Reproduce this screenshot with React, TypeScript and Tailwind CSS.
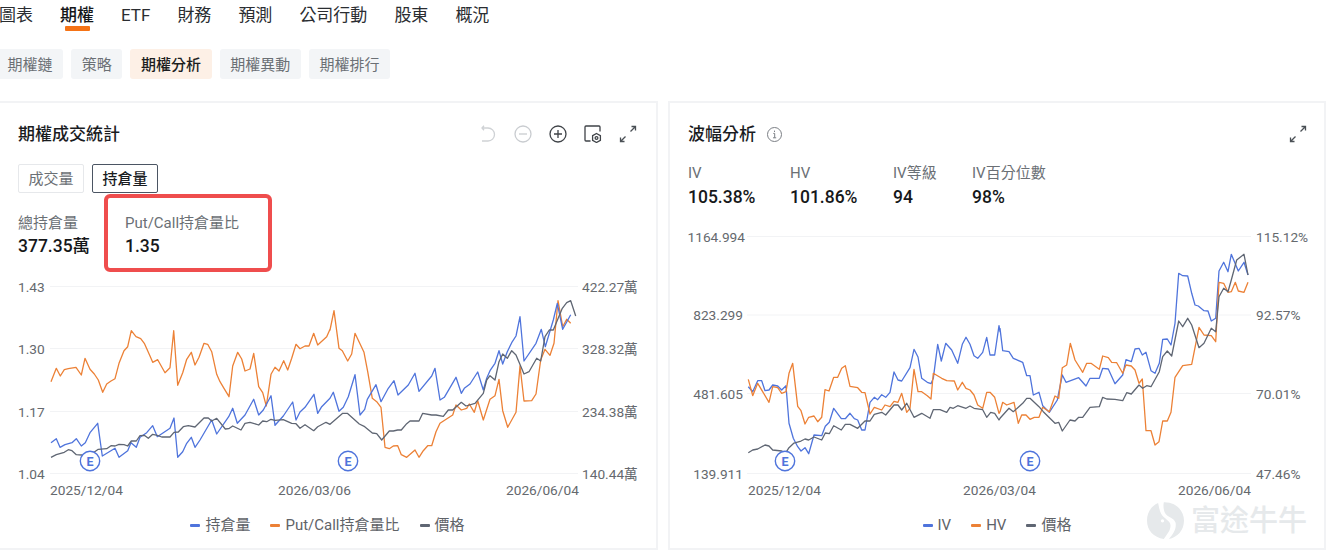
import React from "react";

const BLUE = "#4f74dc";
const ORANGE = "#ec8136";
const GRAY = "#5f6673";

function pts(s: string, ox: number, oy: number) {
  const n = s.trim().split(/[\s;,]+/).map(Number);
  const out: string[] = [];
  for (let i = 0; i + 1 < n.length; i += 2) out.push(`${(ox + n[i] / 3).toFixed(1)},${(oy + n[i + 1] / 3).toFixed(1)}`);
  return out.join(" ");
}

const L = {
  blue: [
    pts("153,488 169,476 180,502 195,494 216,488 229,476 244,498 256,488 270,458 293,430 307,528 345,505 357,532 383,512 393,488 409,502 420,472 440,458 458,437 472,470 490,458 510,445 522,414 533,532 548,515 560,490 574,472 585,502 600,480 635,420 650,462 686,410 698,385 712,430 735,405 761,358 776,405 790,390 813,347 825,436 850,408 878,366 888,420 900,396 915,382 942,343 953,400 965,380 990,355", 0, 280),
    pts("0,355 10,337 27,394 40,382 55,350 75,284 90,405 104,388 112,358 138,314 153,365 175,325 192,302 204,345 235,315 255,280 267,334 305,288 315,265 330,360 343,352 378,292 394,340 403,325 420,312 443,276 460,330 470,295 480,272 495,250 507,212 518,252 532,215 545,188 558,168 570,110 582,243 618,190 634,148 646,200 670,120 682,70 698,148 722,104", 330, 280),
  ].join(" "),
  orange: [
    pts("153,305 169,265 181,288 193,269 205,266 228,262 244,285 255,235 270,268 283,282 295,300 308,337 320,312 333,303 345,296 357,250 372,212 383,200 394,152 408,170 422,176 433,190 450,228 458,247 473,239 495,278 510,263 521,152 533,316 548,278 560,238 574,217 585,255 597,232 612,190 623,193 635,215 650,283 660,305 672,325 687,350 698,258 713,217 725,237 735,273 750,267 761,220 776,320 788,338 799,378 813,283 825,262 837,273 851,242 863,270 875,235 888,193 900,206 915,198 927,198 941,160 953,195 980,170 990,148", 0, 280),
    pts("0,150 12,92 27,205 37,212 53,243 65,222 75,160 102,217 113,275 127,355 140,365 153,382 165,502 178,506 190,498 203,497 214,524 230,532 255,510 267,532 280,512 293,497 305,497 318,455 330,430 345,420 368,405 378,375 394,390 410,385 418,372 433,397 443,362 460,420 480,358 495,347 507,298 518,392 533,442 558,397 570,258 582,363 605,362 618,342 632,240 645,208 660,226 672,190 684,62 698,140 710,118 722,130", 330, 280),
  ].join(" "),
  gray: [
    pts("153,532 169,524 193,517 205,509 216,512 229,524 245,525 270,525 295,508 320,506 333,497 345,498 357,493 372,494 383,498 394,483 409,483 420,467 433,466 445,475 458,463 472,466 485,471 510,471 522,457 535,456 550,440 565,437 585,441 612,414 625,414 635,423 650,415 676,447 686,446 698,438 723,450 735,430 750,427 776,435 788,423 800,425 813,418 825,421 850,419 875,430 888,431 900,445 915,434 941,452 953,440 978,427 990,433", 0, 280),
    pts("0,433 38,400 52,400 88,432 104,440 127,459 140,461 155,480 178,453 190,453 203,450 214,450 230,431 240,423 267,423 278,400 305,405 318,405 340,409 355,390 368,390 394,367 408,378 435,370 460,340 470,300 480,287 495,300 507,245 518,222 532,235 545,212 558,225 582,282 597,275 620,235 632,243 645,170 658,150 670,150 697,85 710,68 722,62 737,108", 330, 280),
  ].join(" "),
};

const R = {
  blue: [
    pts("235,485 248,500 263,467 275,467 285,497 297,495 308,480 323,483 335,495 348,482 357,595 370,640 383,665 393,678 405,668 416,686 432,630 455,632 466,604 478,592 491,550 514,581 526,581 540,565 553,581 563,585 575,615 585,615 600,532 613,517 623,524 635,509 647,517 660,502 672,441 684,465 695,468 720,428 732,373 744,396 755,460 772,472 783,476 790,460 803,358 814,408 827,355 845,375 863,415 877,358 888,337 900,358 912,392 923,400 938,382 950,337 960,390 974,390 987,302 990,320", 670, 225),
    pts("0,310 8,377 27,380 40,400 68,412 80,452 90,452 100,510 117,502 128,542 148,562 172,525 187,450 198,472 236,458 258,483 270,460 298,460 308,430 325,432 345,476 368,450 378,404 394,410 405,372 417,370 427,390 438,382 453,437 465,445 478,415 488,343 502,342 513,360 525,295 536,145 548,152 563,153 575,205 585,240 595,243 612,257 624,258 634,288 647,280 657,138 671,112 684,140 694,88 715,138 732,112 744,150", 1000, 225),
  ].join(" "),
  orange: [
    pts("235,463 248,512 263,475 297,532 308,485 323,488 335,505 348,500 357,445 368,415 383,544 393,557 405,597 416,577 432,573 443,590 455,577 465,494 477,498 491,457 503,457 515,430 526,422 540,484 563,488 575,502 585,503 600,567 613,547 635,555 645,540 660,545 672,529 684,532 695,505 710,562 720,550 732,433 744,500 755,500 772,512 783,522 790,445 815,460 830,467 853,468 863,495 877,472 888,490 900,495 912,510 923,540 938,550 950,502 960,502 974,517 987,565 990,560", 670, 225),
    pts("0,560 8,532 20,540 42,532 55,595 65,570 78,570 90,583 103,577 117,577 128,547 148,560 165,513 176,520 187,428 200,420 211,355 225,405 248,442 260,415 273,415 298,433 308,393 325,398 335,412 350,413 368,445 378,420 394,423 405,435 417,475 427,462 438,617 453,617 465,660 477,650 488,588 502,588 513,562 525,457 548,422 575,418 597,307 612,330 634,332 647,350 657,172 671,175 684,202 694,200 706,172 715,198 732,202 744,172", 1000, 225),
  ].join(" "),
  gray: [
    pts("235,683 248,675 263,672 285,660 297,663 308,675 335,678 348,682 357,668 372,654 393,648 405,642 416,645 432,636 455,645 466,624 478,626 491,602 514,615 526,598 540,598 563,610 585,588 600,588 613,568 635,562 647,570 672,540 684,540 695,555 710,535 732,577 755,565 780,580 790,554 810,554 830,562 840,547 850,550 863,542 888,550 900,543 912,550 938,554 950,577 962,562 974,565 987,585 990,580", 670, 225),
    pts("0,580 27,550 40,560 68,535 80,520 90,520 117,545 130,560 165,595 176,592 187,618 210,585 225,588 236,577 248,577 270,547 298,545 308,517 320,522 345,523 368,527 380,503 394,507 417,480 428,490 440,482 453,485 478,440 488,395 502,378 515,393 536,288 548,305 563,280 575,300 597,368 612,355 634,310 647,320 657,215 671,190 684,200 694,165 710,105 732,88 744,150", 1000, 225),
  ].join(" "),
};

type AxisLabel = { t: string; x: number; y: number; anchor?: "start" | "end" };

function Chart(props: {
  vb: [number, number, number, number];
  series: { blue: string; orange: string; gray: string };
  grid: number[];
  gx: [number, number];
  labels: AxisLabel[];
  marks: [number, number][];
  order: ("blue" | "orange" | "gray")[];
}) {
  const [x, y, w, h] = props.vb;
  const colors = { blue: BLUE, orange: ORANGE, gray: GRAY };
  return (
    <svg viewBox={`${x} ${y} ${w} ${h}`} width={w} height={h} className="block shrink-0">
      {props.grid.map((g) => (
        <line key={g} x1={props.gx[0]} x2={props.gx[1]} y1={g} y2={g} stroke="#f2f3f5" strokeWidth="1" />
      ))}
      {props.labels.map((l) => (
        <text key={l.t + l.x} x={l.x} y={l.y + 5} textAnchor={l.anchor || "start"} fontSize="13.7" fill="#65696e">
          {l.t}
        </text>
      ))}
      {props.order.map((k) => (
        <polyline key={k} points={props.series[k]} fill="none" stroke={colors[k]} strokeWidth="1.3" strokeLinejoin="round" />
      ))}
      {props.marks.map(([cx, cy]) => (
        <g key={cx}>
          <circle cx={cx} cy={cy} r="9.7" fill="#fff" stroke={BLUE} strokeWidth="1.4" />
          <text x={cx} y={cy + 4.5} textAnchor="middle" fontSize="12.5" fontWeight="700" fill={BLUE}>
            E
          </text>
        </g>
      ))}
    </svg>
  );
}

function Legend({ items }: { items: { c: string; t: string }[] }) {
  return (
    <div className="flex h-5 items-center justify-center gap-5 text-[15px] text-[#5f6368]">
      {items.map((i) => (
        <div key={i.t} className="flex items-center gap-[5px]">
          <span className="h-[3px] w-[10px] rounded-[1px]" style={{ background: i.c }} />
          <span>{i.t}</span>
        </div>
      ))}
    </div>
  );
}

function Stat({ label, value, className, tight }: { label: string; value: string; className?: string; tight?: boolean }) {
  return (
    <div className={className}>
      <div className="text-[15px] leading-5 text-[#6b7075]">{label}</div>
      <div className={tight ? "mt-px text-[17.5px] font-medium leading-6 text-[#16181a]" : "mt-[2px] text-[17.5px] font-medium leading-6 text-[#16181a]"}>{value}</div>
    </div>
  );
}

const Expand = () => (
  <svg width="18" height="18" viewBox="0 0 18 18" fill="none" stroke="#4a4f55" strokeWidth="1.3">
    <path d="M12.5 1.5h4v4M16.5 1.5L11.5 6.5M5.5 16.5h-4v-4M1.5 16.5L6.5 11.5" />
  </svg>
);

export default function App() {
  return (
    <div className="h-[557px] w-[1328px] overflow-hidden bg-white font-[Roboto,'Noto_Sans_CJK_TC',sans-serif] text-[#1f2226]">
      <div className="-ml-[3px] w-[1331px]">
        <nav className="ml-[2px] flex gap-[27px] pt-[3px] text-[17px] leading-6 text-[#2a2d31]">
          {["圖表", "期權", "ETF", "財務", "預測", "公司行動", "股東", "概況"].map((t) => (
            <div key={t} className="flex flex-col items-center">
              <span className={t === "期權" ? "font-medium text-[#15171a]" : ""}>{t}</span>
              {t === "期權" && <span className="-mt-px h-[5px] w-[25px] rounded-[1px] bg-[#f57316]" />}
            </div>
          ))}
        </nav>
        <div className="mt-[18px] flex gap-2 text-[15px]">
          {["期權鏈", "策略", "期權分析", "期權異動", "期權排行"].map((t) => (
            <div
              key={t}
              className={
                t === "期權分析"
                  ? "flex h-[30px] items-center rounded-[3px] bg-[#fdf0e6] px-[10.6px] pt-[2px] font-medium text-[#1c1e21]"
                  : "flex h-[30px] items-center rounded-[3px] bg-[#f3f5f7] px-[10.6px] pt-[2px] text-[#6b7075]"
              }
            >
              {t}
            </div>
          ))}
        </div>
        <div className="mt-[22px] flex gap-[10px]">
          {/* left card */}
          <section className="h-[449px] w-[661px] shrink-0 border-2 border-[#f2f3f5]">
            <header className="mt-[19px] flex h-6 items-center justify-between pl-[19px] pr-[19px]">
              <h2 className="text-[17px] font-medium leading-6 text-[#1a1c1f]">期權成交統計</h2>
              <div className="flex items-center gap-[17px]">
                <svg width="18" height="18" viewBox="0 0 18 18" fill="none" stroke="#cfd2d5" strokeWidth="1.3">
                  <path d="M3 3h6a6.5 6.5 0 0 1 0 13H3M5 .8L3 3l2 2.2" />
                </svg>
                <svg width="18" height="18" viewBox="0 0 18 18" fill="none" stroke="#c9ccd0" strokeWidth="1.3">
                  <circle cx="9" cy="9" r="8" />
                  <path d="M5 9h8" />
                </svg>
                <svg width="18" height="18" viewBox="0 0 18 18" fill="none" stroke="#3f4348" strokeWidth="1.3">
                  <circle cx="9" cy="9" r="8" />
                  <path d="M5 9h8M9 5v8" />
                </svg>
                <svg width="18" height="18" viewBox="0 0 18 18" fill="none" stroke="#3f4348" strokeWidth="1.3">
                  <path d="M6.5 16H2a1 1 0 0 1-1-1V2a1 1 0 0 1 1-1h13a1 1 0 0 1 1 1v4.5" />
                  <path d="M12.5 8.5l3.9 2.25v4.5l-3.9 2.25-3.9-2.25v-4.5z" />
                  <circle cx="12.5" cy="13" r="1.4" />
                </svg>
                <Expand />
              </div>
            </header>
            <div className="ml-[19px] mt-[18px] flex gap-2 text-[15px]">
              <div className="flex h-[29px] w-[66px] items-center justify-center rounded-[2px] border border-[#e6e8eb] pt-[2px] text-[#6b7075]">成交量</div>
              <div className="flex h-[29px] w-[66px] items-center justify-center rounded-[2px] border border-[#4b5563] pt-[2px] font-medium text-[#1a1c1f]">持倉量</div>
            </div>
            <div className="ml-[19px] mt-[20px] flex">
              <Stat tight label="總持倉量" value="377.35萬" className="w-[107px]" />
              <div className="relative">
                <Stat tight label="Put/Call持倉量比" value="1.35" />
                <div className="absolute -left-[21px] -top-[19px] h-[78px] w-[168px] rounded-[6px] border-4 border-[#ef4d4d]" />
              </div>
            </div>
            <div className="mt-[14px]">
              <Chart
                vb={[-1, 272, 657, 232]}
                series={L}
                order={["orange", "blue", "gray"]}
                grid={[286.5, 348.5, 411.5, 473.5]}
                gx={[50, 578]}
                marks={[[90, 461], [348, 461]]}
                labels={[
                  { t: "1.43", x: 18, y: 287 },
                  { t: "1.30", x: 18, y: 349 },
                  { t: "1.17", x: 18, y: 412 },
                  { t: "1.04", x: 18, y: 474 },
                  { t: "422.27萬", x: 582, y: 287 },
                  { t: "328.32萬", x: 582, y: 349 },
                  { t: "234.38萬", x: 582, y: 412 },
                  { t: "140.44萬", x: 582, y: 474 },
                  { t: "2025/12/04", x: 50, y: 490 },
                  { t: "2026/03/06", x: 278, y: 490 },
                  { t: "2026/06/04", x: 506, y: 490 },
                ]}
              />
            </div>
            <div className="mt-[11px]">
              <Legend items={[{ c: BLUE, t: "持倉量" }, { c: ORANGE, t: "Put/Call持倉量比" }, { c: GRAY, t: "價格" }]} />
            </div>
          </section>

          {/* right card */}
          <section className="relative h-[449px] w-[658px] shrink-0 border-2 border-[#f2f3f5]">
            <header className="mt-[19px] flex h-6 items-center justify-between pl-[18px] pr-[17px]">
              <div className="flex items-center gap-[11px]">
                <h2 className="text-[17px] font-medium leading-6 text-[#1a1c1f]">波幅分析</h2>
                <svg width="15" height="15" viewBox="0 0 15 15" fill="none" stroke="#7b7f85" strokeWidth="1">
                  <circle cx="7.5" cy="7.5" r="7" />
                  <path d="M6.3 6.4h1.4v4.4M6 10.8h3.2M7.5 3.6v1.4" />
                </svg>
              </div>
              <Expand />
            </header>
            <div className="ml-[18px] mt-[17px] flex">
              <Stat label="IV" value="105.38%" className="w-[102px]" />
              <Stat label="HV" value="101.86%" className="w-[103px]" />
              <Stat label="IV等級" value="94" className="w-[79px]" />
              <Stat label="IV百分位數" value="98%" />
            </div>
            <div className="mt-[13px]">
              <Chart
                vb={[670, 222, 654, 282]}
                series={R}
                order={["blue", "orange", "gray"]}
                grid={[236.5, 315, 393.5, 473.5]}
                gx={[747, 1251]}
                marks={[[785, 461], [1030, 461]]}
                labels={[
                  { t: "1164.994", x: 745, y: 237, anchor: "end" },
                  { t: "823.299", x: 743, y: 315, anchor: "end" },
                  { t: "481.605", x: 743, y: 394, anchor: "end" },
                  { t: "139.911", x: 743, y: 474, anchor: "end" },
                  { t: "115.12%", x: 1256, y: 237 },
                  { t: "92.57%", x: 1256, y: 315 },
                  { t: "70.01%", x: 1256, y: 394 },
                  { t: "47.46%", x: 1256, y: 474 },
                  { t: "2025/12/04", x: 748, y: 490 },
                  { t: "2026/03/04", x: 963, y: 490 },
                  { t: "2026/06/04", x: 1178, y: 490 },
                ]}
              />
            </div>
            <div className="mt-[11px]">
              <Legend items={[{ c: BLUE, t: "IV" }, { c: ORANGE, t: "HV" }, { c: GRAY, t: "價格" }]} />
            </div>
            <div className="absolute right-[17px] top-[399px] flex items-center gap-[7px] text-[#e6e9eb]">
              <svg width="37" height="37" viewBox="0 0 110 110" fill="#e6e9eb">
                <path d="M33 3C12 12 0 32 0 55c0 30 20 50 50 55 10-15 20-25 20-40 0-15-20-20-28-35C37 25 35 12 33 3z" />
                <path d="M50 1c35-1 60 24 60 54 0 30-20 50-45 55 13-15 23-30 20-48-5-17-25-14-33-32-3-10-4-20-2-29z" />
                <circle cx="46" cy="56" r="5" fill="#fff" />
              </svg>
              <span className="text-[29px] font-medium leading-9">富途牛牛</span>
            </div>
          </section>
        </div>
      </div>
    </div>
  );
}
